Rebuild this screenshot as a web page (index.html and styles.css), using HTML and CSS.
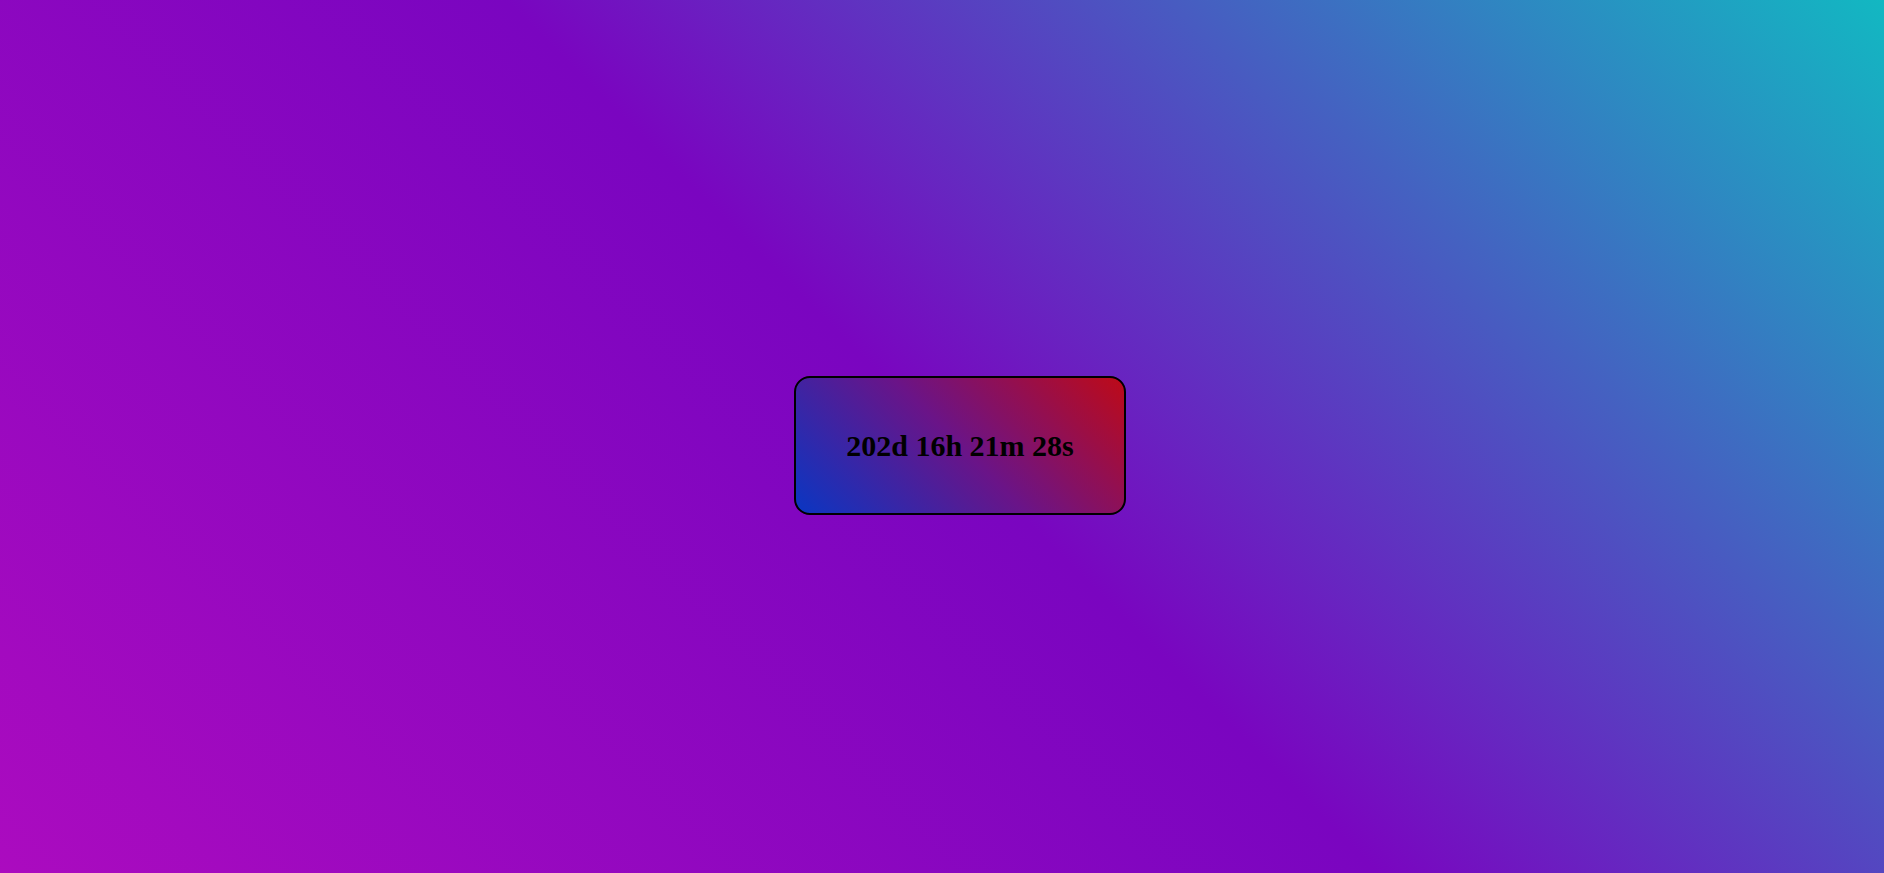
FILE: index.html
```html
<!DOCTYPE html>
<html>
<head>
<meta charset="utf-8">
<link rel="stylesheet" href="styles.css">
</head>
<body>
<main class="stage">
  <div class="timer">202d 16h 21m 28s</div>
</main>
</body>
</html>
```
FILE: styles.css
```css
html, body {
  margin: 0;
  height: 100%;
}
body {
  background: linear-gradient(45deg, #ab0bbf, #7a05c0, #12b8c2);
  font-family: "Liberation Serif", "Times New Roman", serif;
}
.stage {
  height: 100%;
  box-sizing: border-box;
  display: flex;
  align-items: center;
  justify-content: center;
  padding-left: 36px;
  padding-top: 17px;
}
.timer {
  box-sizing: border-box;
  width: 332px;
  height: 139px;
  display: flex;
  align-items: center;
  justify-content: center;
  padding-top: 2px;
  border: 2px solid #000;
  border-radius: 16px;
  background: linear-gradient(45deg, #0a36c2, #6a1488, #bd0a18);
  font-size: 30px;
  font-weight: bold;
  color: #000;
}
```
